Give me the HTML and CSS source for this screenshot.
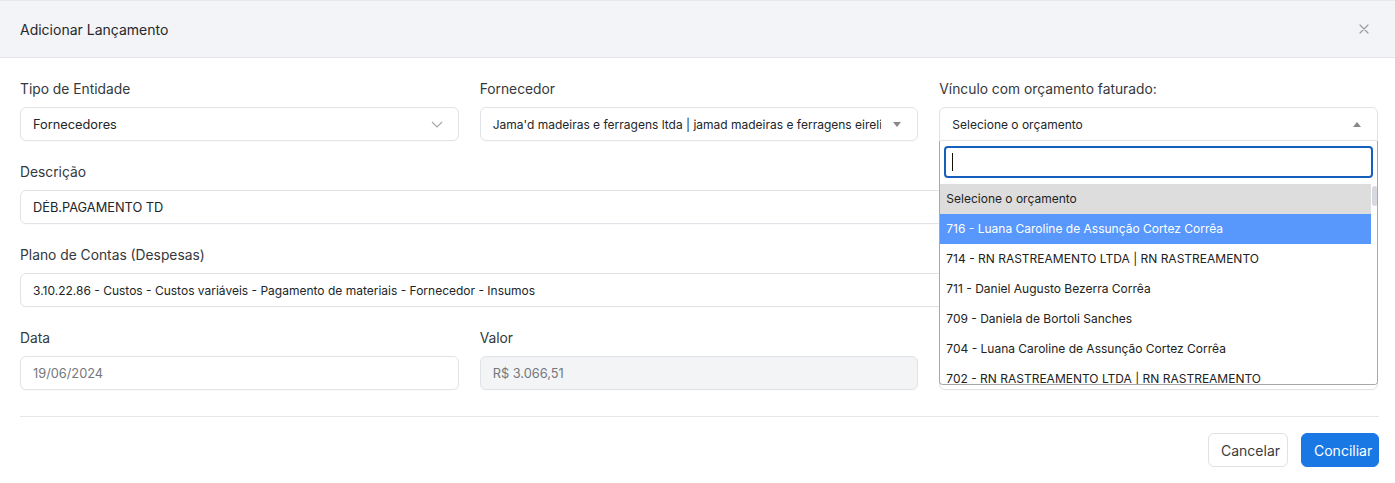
FILE: index.html
```html
<!DOCTYPE html>
<html lang="pt-BR">
<head>
<meta charset="utf-8">
<title>Adicionar Lançamento</title>
<link rel="stylesheet" href="styles.css">
</head>
<body>
<div class="modal">
  <div class="modal-header">
    <h5 class="modal-title">Adicionar Lançamento</h5>
    <span class="close-btn">
      <svg width="10" height="10" viewBox="0 0 10 10"><path d="M1 1L9 9M9 1L1 9" stroke="#9a9ca0" stroke-width="1.2" fill="none" stroke-linecap="round"/></svg>
    </span>
  </div>
  <div class="modal-body">
    <div class="row three">
      <div class="field">
        <label class="lbl">Tipo de Entidade</label>
        <div class="control select-native">
          <span class="val">Fornecedores</span>
          <svg class="chev" width="12" height="7" viewBox="0 0 12 7"><path d="M1 1L6 6L11 1" stroke="#a3a6aa" stroke-width="1.1" fill="none"/></svg>
        </div>
      </div>
      <div class="field">
        <label class="lbl">Fornecedor</label>
        <div class="control s2">
          <span class="val small">Jama'd madeiras e ferragens ltda | jamad madeiras e ferragens eireli</span>
          <span class="tri down"></span>
        </div>
      </div>
      <div class="field">
        <label class="lbl">Vínculo com orçamento faturado:</label>
        <div class="anchor">
          <div class="control s2 open">
            <span class="val small">Selecione o orçamento</span>
            <span class="tri up"></span>
          </div>
          <div class="s2-dropdown">
            <div class="s2-search"><div class="s2-search-field"><span class="caret"></span></div></div>
            <div class="s2-results">
              <ul class="s2-list">
                <li class="opt selected">Selecione o orçamento</li>
                <li class="opt hl">716 - Luana Caroline de Assunção Cortez Corrêa</li>
                <li class="opt">714 - RN RASTREAMENTO LTDA | RN RASTREAMENTO</li>
                <li class="opt">711 - Daniel Augusto Bezerra Corrêa</li>
                <li class="opt">709 - Daniela de Bortoli Sanches</li>
                <li class="opt">704 - Luana Caroline de Assunção Cortez Corrêa</li>
                <li class="opt">702 - RN RASTREAMENTO LTDA | RN RASTREAMENTO</li>
              </ul>
              <div class="s2-scroll"><div class="thumb"></div></div>
            </div>
          </div>
        </div>
      </div>
    </div>
    <div class="field">
      <label class="lbl">Descrição</label>
      <div class="control"><span class="val">DÉB.PAGAMENTO TD</span></div>
    </div>
    <div class="field">
      <label class="lbl">Plano de Contas (Despesas)</label>
      <div class="control"><span class="val small">3.10.22.86 - Custos - Custos variáveis - Pagamento de materiais - Fornecedor - Insumos</span></div>
    </div>
    <div class="row three">
      <div class="field">
        <label class="lbl">Data</label>
        <div class="control"><span class="val muted">19/06/2024</span></div>
      </div>
      <div class="field">
        <label class="lbl">Valor</label>
        <div class="control disabled"><span class="val muted">R$ 3.066,51</span></div>
      </div>
      <div class="field">
        <label class="lbl">&nbsp;</label>
        <div class="control"></div>
      </div>
    </div>
  </div>
  <div class="modal-footer">
    <button class="btn btn-light">Cancelar</button>
    <button class="btn btn-primary">Conciliar</button>
  </div>
</div>
</body>
</html>
```
FILE: styles.css
```css
* { box-sizing: border-box; }
html, body { margin: 0; padding: 0; background: #fff; }
body {
  font-family: Inter, "Noto Sans", "Liberation Sans", sans-serif;
  color: #212529;
  width: 1395px;
  height: 483px;
  overflow: hidden;
}
.modal { width: 1395px; }
.modal-header {
  height: 58px;
  background: #f3f4f8;
  border-top: 1px solid #e7e8ec;
  border-bottom: 1px solid #e4e5e9;
  display: flex;
  align-items: center;
  justify-content: space-between;
  padding: 0 26px 0 20px;
}
.modal-title {
  margin: 0;
  font-size: 14px;
  font-weight: 400;
  color: #25282c;
}
.close-btn { display: flex; }
.modal-body { padding: 21px 17px 0 20px; }
.row.three {
  display: grid;
  grid-template-columns: repeat(3, minmax(0, 1fr));
  column-gap: 21px;
}
.field { margin-bottom: 21px; min-width: 0; }
.anchor { position: relative; }
.lbl {
  display: block;
  font-size: 13.8px;
  line-height: 20px;
  margin-bottom: 8px;
  color: #35383c;
}
.control {
  height: 34px;
  border: 1px solid #e0e3e7;
  border-radius: 6px;
  background: #fff;
  display: flex;
  align-items: center;
  padding: 0 12px;
  box-shadow: 0 1px 1px rgba(0,0,0,0.02);
}
.val { font-size: 12.8px; color: #212529; white-space: nowrap; overflow: hidden; flex: 1; min-width: 0; }
.val.small { font-size: 12px; }
.val.muted { color: #74787d; }
.control.disabled { background: #f2f4f5; }
.select-native .chev { margin-right: 3px; flex: none; }
.s2 { padding-right: 16px; }
.tri { flex: none; width: 0; height: 0; border-left: 4px solid transparent; border-right: 4px solid transparent; margin-left: 12px; }
.tri.down { border-top: 5px solid #888; }
.tri.up { border-bottom: 5px solid #888; }
.s2.open { border-radius: 6px 6px 0 0; }
.s2-dropdown {
  position: absolute;
  left: 0;
  right: 0;
  top: 100%;
  z-index: 5;
  background: #fff;
  border: 1px solid #a9a9a9;
  border-top: none;
  border-radius: 0 0 4px 4px;
  overflow: hidden;
}
.s2-search { padding: 5px 4px 6px 4px; }
.s2-search-field {
  height: 32px;
  border: 2px solid #1560bd;
  border-radius: 4px;
  display: flex;
  align-items: center;
  padding-left: 6px;
}
.caret { width: 1px; height: 18px; background: #111; }
.s2-results { display: flex; height: 200px; }
.s2-list { list-style: none; margin: 0; padding: 0; flex: 1; overflow: hidden; }
.opt {
  height: 30px;
  line-height: 30px;
  padding: 0 6px;
  font-size: 12px;
  color: #222;
  white-space: nowrap;
}
.opt.selected { background: #dddddd; }
.opt.hl { background: #5897fb; color: #fff; }
.s2-scroll { width: 6px; background: #fff; padding-top: 2px; }
.thumb { height: 20px; background: #d6dae0; border-radius: 3px; margin-left: 1px; }
.modal-footer {
  margin: 5px 16px 0 20px;
  border-top: 1px solid #e6e6e6;
  padding-top: 16px;
  display: flex;
  justify-content: flex-end;
  gap: 13px;
}
.btn {
  height: 34px;
  border-radius: 6px;
  font-family: inherit;
  font-size: 14px;
  padding: 0 12px;
  cursor: pointer;
}
.btn-light { background: #fff; border: 1px solid #dfe1e5; color: #3a3d41; width: 80px; }
.btn-primary { background: #1a78e5; border: 1px solid #1a78e5; color: #fff; width: 78px; }
```
